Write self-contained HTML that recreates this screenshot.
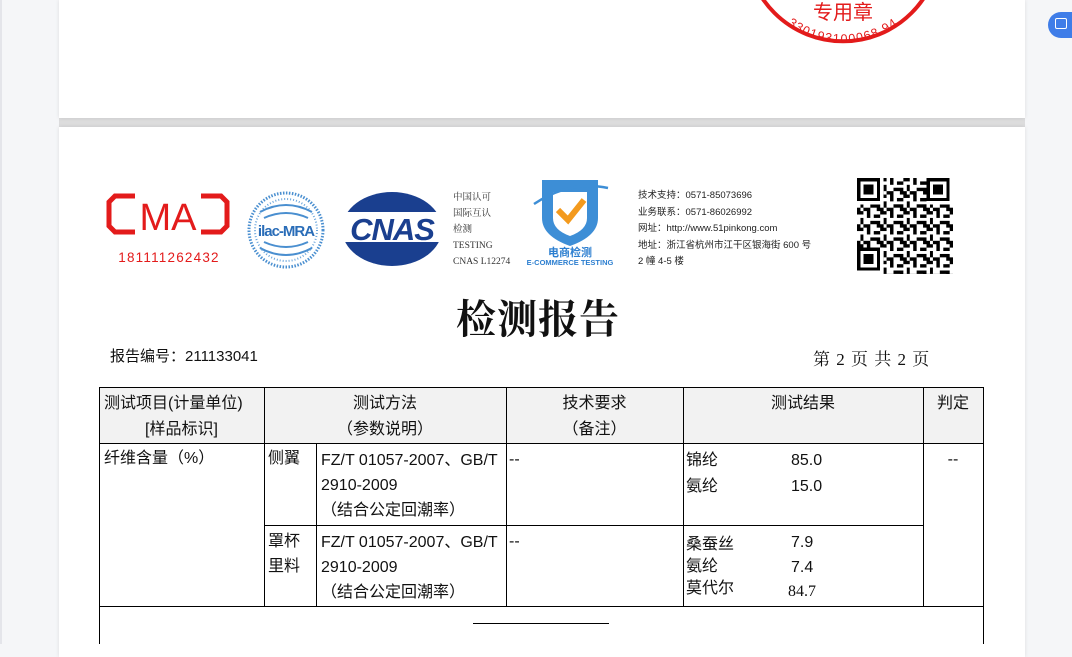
<!DOCTYPE html>
<html><head><meta charset="utf-8"><style>
*{margin:0;padding:0;box-sizing:border-box}
body{width:1072px;height:644px;overflow:hidden;background:#f5f6f8;position:relative;font-family:"Liberation Sans","Noto Sans CJK SC",sans-serif;color:#111}
.abs{position:absolute}
.page{position:absolute;left:59px;width:966px;background:#fff;box-shadow:0 0 4px rgba(0,0,0,.10)}
.s{font-family:"Liberation Serif","Noto Serif CJK SC",serif}
.t{font-size:16px;line-height:24px;white-space:nowrap}
.hl{position:absolute;height:1px;background:#000}
.vl{position:absolute;width:1px;background:#000}
</style></head><body>
<div class="abs" style="left:0;top:0;width:2px;height:644px;background:#e4e5ea"></div>
<div class="abs" style="left:59px;top:118px;width:966px;height:9px;background:#dcdcdd"></div>
<div class="page" style="top:0;height:118px;overflow:hidden">
<svg class="abs" style="left:681px;top:0" width="206" height="50" viewBox="0 0 206 50">
<circle cx="103" cy="-55.7" r="97" fill="none" stroke="#e31b1b" stroke-width="4"/>
<text x="103" y="19" text-anchor="middle" font-size="20" fill="#e31b1b" font-family="Noto Sans CJK SC,sans-serif">专用章</text>
<path id="arc" d="M40 18 A92 92 0 0 0 166 18" fill="none"/>
<text font-size="12.5" fill="#e31b1b" letter-spacing="1.2" font-family="Liberation Sans,sans-serif"><textPath href="#arc" startOffset="50%" text-anchor="middle">330193100068 94</textPath></text>
</svg>
</div>
<div class="page" style="top:127px;height:530px"></div>

<div class="abs" style="left:1048px;top:12px;width:24px;height:26px;border-radius:13px 0 0 13px;background:#3f7de8"></div>
<div class="abs" style="left:1055px;top:18px;width:12px;height:11px;border:1.5px solid #fff;border-radius:2px"></div>

<!-- CMA -->
<svg class="abs" style="left:105px;top:190px" width="132" height="80" viewBox="0 0 132 80">
<path d="M30 6 H10 L4 12 V36 L10 42 H30 M96 6 H116 L122 12 V36 L116 42 H96" fill="none" stroke="#e31b1b" stroke-width="5"/>
<text x="63" y="40" text-anchor="middle" font-size="38" fill="#e31b1b" font-family="Liberation Sans,sans-serif">MA</text>
<text x="64" y="72" text-anchor="middle" font-size="13.5" fill="#e31b1b" letter-spacing="1.2" font-family="Liberation Sans,sans-serif">181111262432</text>
</svg>
<!-- ilac -->
<svg class="abs" style="left:246px;top:190px" width="80" height="80" viewBox="0 0 80 80">
<circle cx="40" cy="40" r="37" fill="none" stroke="#4a8fd0" stroke-width="3" stroke-dasharray="1.5 1.5"/>
<circle cx="40" cy="40" r="31" fill="none" stroke="#6aa5dc" stroke-width="2" stroke-dasharray="1 2"/>
<path d="M14 22 Q40 8 66 22 M18 28 Q40 18 62 28 M14 58 Q40 72 66 58 M18 52 Q40 62 62 52" stroke="#4a8fd0" stroke-width="2" fill="none"/>
<text x="40" y="46" text-anchor="middle" font-size="15" font-weight="bold" fill="#2a6db8" font-family="Liberation Sans,sans-serif" letter-spacing="-1">ilac-MRA</text>
</svg>
<!-- CNAS -->
<svg class="abs" style="left:340px;top:190px" width="104" height="78" viewBox="0 0 104 78">
<ellipse cx="52" cy="39" rx="50" ry="37" fill="#1a3f8f"/>
<rect x="0" y="22" width="104" height="30" fill="#fff"/>
<text x="52" y="50" text-anchor="middle" font-size="31" font-style="italic" font-weight="bold" fill="#1a3f8f" font-family="Liberation Sans,sans-serif" letter-spacing="-1">CNAS</text>
</svg>
<div class="abs s" style="left:453px;top:190px;font-size:9.5px;line-height:16px;color:#333">中国认可<br>国际互认<br>检测<br>TESTING<br>CNAS L12274</div>
<!-- shield -->
<svg class="abs" style="left:520px;top:174px" width="100" height="92" viewBox="0 0 100 92">
<path d="M22 6 H78 V44 Q78 62 50 72 Q22 62 22 44 Z" fill="#3d8ed6"/>
<path d="M33 18 H67 V44 Q67 56 50 62 Q33 56 33 44 Z" fill="#fff"/>
<path d="M38 36 L48 46 L64 26" stroke="#f39a1e" stroke-width="6" fill="none"/>
<path d="M14 30 Q50 6 88 14" stroke="#3d8ed6" stroke-width="2.5" fill="none"/>
<text x="50" y="82" text-anchor="middle" font-size="11" font-weight="bold" fill="#2d7fd0" font-family="Noto Sans CJK SC,sans-serif">电商检测</text>
<text x="50" y="91" text-anchor="middle" font-size="7.5" font-weight="bold" fill="#2d7fd0" font-family="Liberation Sans,sans-serif">E-COMMERCE TESTING</text>
</svg>
<div class="abs" style="left:638px;top:188px;font-size:9.5px;line-height:16.5px;color:#222;white-space:nowrap">技术支持：0571-85073696<br>业务联系：0571-86026992<br>网址：http://www.51pinkong.com<br>地址：浙江省杭州市江干区银海街 600 号<br>2 幢 4-5 楼</div>
<!-- QR -->
<svg class="abs" style="left:857px;top:178px" width="96" height="96" viewBox="0 0 29 29" shape-rendering="crispEdges">
<defs><pattern id="q" width="7" height="5" patternUnits="userSpaceOnUse">
<rect x="0" y="0" width="2" height="1"/><rect x="3" y="0" width="1" height="2"/><rect x="5" y="1" width="2" height="1"/><rect x="1" y="2" width="1" height="2"/><rect x="4" y="3" width="2" height="1"/><rect x="0" y="4" width="1" height="1"/><rect x="2" y="4" width="2" height="1"/><rect x="6" y="3" width="1" height="2"/></pattern></defs>
<rect width="29" height="29" fill="url(#q)"/>
<g fill="#fff"><rect width="8" height="8"/><rect x="21" width="8" height="8"/><rect y="21" width="8" height="8"/></g>
<g fill="none" stroke="#000"><rect x=".5" y=".5" width="6" height="6"/><rect x="21.5" y=".5" width="6" height="6"/><rect x=".5" y="21.5" width="6" height="6"/></g>
<rect x="2" y="2" width="3" height="3"/><rect x="23" y="2" width="3" height="3"/><rect x="2" y="23" width="3" height="3"/>
</svg>

<div class="abs" style="left:456px;top:292px;font-size:40px;font-weight:bold;line-height:50px;font-family:'Noto Serif CJK SC',serif;letter-spacing:1px">检测报告</div>
<div class="abs t" style="left:110px;top:345px;font-size:15px">报告编号：211133041</div>
<div class="abs t s" style="left:813px;top:348px;font-size:17px;word-spacing:2px">第 2 页 共 2 页</div>

<!-- table -->
<div class="abs" style="left:99px;top:387px;width:884px;height:56px;background:#f2f2f2"></div>
<div class="hl" style="left:99px;top:387px;width:885px"></div>
<div class="hl" style="left:99px;top:443px;width:885px"></div>
<div class="hl" style="left:264px;top:525px;width:660px"></div>
<div class="hl" style="left:99px;top:606px;width:885px"></div>
<div class="vl" style="left:99px;top:387px;height:257px"></div>
<div class="vl" style="left:264px;top:387px;height:219px"></div>
<div class="vl" style="left:316px;top:443px;height:163px"></div>
<div class="vl" style="left:506px;top:387px;height:219px"></div>
<div class="vl" style="left:683px;top:387px;height:219px"></div>
<div class="vl" style="left:923px;top:387px;height:219px"></div>
<div class="vl" style="left:983px;top:387px;height:257px"></div>
<div class="hl" style="left:473px;top:623px;width:136px"></div>

<div class="abs t" style="left:104px;top:392px;width:160px">测试项目(计量单位)</div>
<div class="abs t" style="left:99px;top:418px;width:165px;text-align:center">[样品标识]</div>
<div class="abs t" style="left:264px;top:392px;width:242px;text-align:center">测试方法</div>
<div class="abs t" style="left:264px;top:418px;width:242px;text-align:center">（参数说明）</div>
<div class="abs t" style="left:506px;top:392px;width:177px;text-align:center">技术要求</div>
<div class="abs t" style="left:506px;top:418px;width:177px;text-align:center">（备注）</div>
<div class="abs t" style="left:683px;top:392px;width:240px;text-align:center">测试结果</div>
<div class="abs t" style="left:923px;top:392px;width:60px;text-align:center">判定</div>

<div class="abs t" style="left:104px;top:447px">纤维含量（%）</div>
<div class="abs t" style="left:268px;top:447px">侧翼</div>
<div class="abs t" style="left:321px;top:448px;line-height:25px">FZ/T 01057-2007、GB/T<br>2910-2009<br>（结合公定回潮率）</div>
<div class="abs t" style="left:509px;top:448px">--</div>
<div class="abs t" style="left:686px;top:448px;line-height:26px">锦纶<br>氨纶</div>
<div class="abs t" style="left:791px;top:448px;line-height:26px">85.0<br>15.0</div>
<div class="abs t" style="left:923px;top:448px;width:60px;text-align:center">--</div>

<div class="abs t" style="left:268px;top:529px;line-height:25px">罩杯<br>里料</div>
<div class="abs t" style="left:321px;top:530px;line-height:25px">FZ/T 01057-2007、GB/T<br>2910-2009<br>（结合公定回潮率）</div>
<div class="abs t" style="left:509px;top:530px">--</div>
<div class="abs t" style="left:686px;top:534px;line-height:22px">桑蚕丝<br>氨纶<br>莫代尔</div>
<div class="abs t" style="left:791px;top:530px;line-height:25px">7.9<br>7.4</div>
<div class="abs t s" style="left:788px;top:580px">84.7</div>
</body></html>
